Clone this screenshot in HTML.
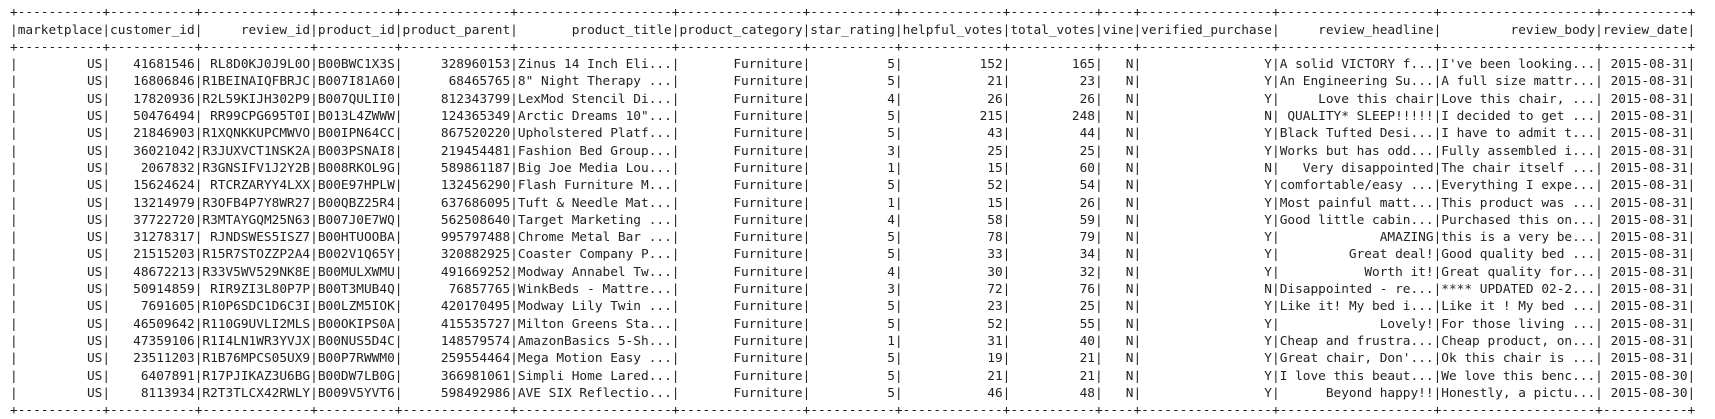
<!DOCTYPE html>
<html><head><meta charset="utf-8">
<style>
html,body{margin:0;padding:0;background:#fff;width:1715px;height:418px;overflow:hidden}
.t{position:absolute;left:10px;top:4.3px;font-family:"DejaVu Sans Mono","Liberation Mono",monospace;font-size:12.79px;line-height:17.3px;color:#222}
.r{height:17.3px;white-space:nowrap;display:block}
.r i{font-style:normal;display:inline-block;vertical-align:top;text-align:right;overflow:hidden;white-space:pre;height:17.3px}
.r.b i{text-align:left}
.a{width:11ch}.b1{width:14ch}.c{width:10ch}.d{width:20ch}.e{width:16ch}.f{width:13ch}.g{width:4ch}.h{width:17ch}
</style></head><body>
<div class="t"><div class="r b">+<i class="a">--------------------</i>+<i class="a">--------------------</i>+<i class="b1">--------------------</i>+<i class="c">--------------------</i>+<i class="b1">--------------------</i>+<i class="d">--------------------</i>+<i class="e">--------------------</i>+<i class="a">--------------------</i>+<i class="f">--------------------</i>+<i class="a">--------------------</i>+<i class="g">--------------------</i>+<i class="h">--------------------</i>+<i class="d">--------------------</i>+<i class="d">--------------------</i>+<i class="a">--------------------</i>+</div><div class="r">|<i class="a">marketplace</i>|<i class="a">customer_id</i>|<i class="b1">review_id</i>|<i class="c">product_id</i>|<i class="b1">product_parent</i>|<i class="d">product_title</i>|<i class="e">product_category</i>|<i class="a">star_rating</i>|<i class="f">helpful_votes</i>|<i class="a">total_votes</i>|<i class="g">vine</i>|<i class="h">verified_purchase</i>|<i class="d">review_headline</i>|<i class="d">review_body</i>|<i class="a">review_date</i>|</div><div class="r b">+<i class="a">--------------------</i>+<i class="a">--------------------</i>+<i class="b1">--------------------</i>+<i class="c">--------------------</i>+<i class="b1">--------------------</i>+<i class="d">--------------------</i>+<i class="e">--------------------</i>+<i class="a">--------------------</i>+<i class="f">--------------------</i>+<i class="a">--------------------</i>+<i class="g">--------------------</i>+<i class="h">--------------------</i>+<i class="d">--------------------</i>+<i class="d">--------------------</i>+<i class="a">--------------------</i>+</div><div class="r">|<i class="a">US</i>|<i class="a">41681546</i>|<i class="b1">RL8D0KJ0J9L0O</i>|<i class="c">B00BWC1X3S</i>|<i class="b1">328960153</i>|<i class="d">Zinus 14 Inch Eli...</i>|<i class="e">Furniture</i>|<i class="a">5</i>|<i class="f">152</i>|<i class="a">165</i>|<i class="g">N</i>|<i class="h">Y</i>|<i class="d">A solid VICTORY f...</i>|<i class="d">I've been looking...</i>|<i class="a">2015-08-31</i>|</div><div class="r">|<i class="a">US</i>|<i class="a">16806846</i>|<i class="b1">R1BEINAIQFBRJC</i>|<i class="c">B007I81A60</i>|<i class="b1">68465765</i>|<i class="d">8" Night Therapy ...</i>|<i class="e">Furniture</i>|<i class="a">5</i>|<i class="f">21</i>|<i class="a">23</i>|<i class="g">N</i>|<i class="h">Y</i>|<i class="d">An Engineering Su...</i>|<i class="d">A full size mattr...</i>|<i class="a">2015-08-31</i>|</div><div class="r">|<i class="a">US</i>|<i class="a">17820936</i>|<i class="b1">R2L59KIJH302P9</i>|<i class="c">B007QULII0</i>|<i class="b1">812343799</i>|<i class="d">LexMod Stencil Di...</i>|<i class="e">Furniture</i>|<i class="a">4</i>|<i class="f">26</i>|<i class="a">26</i>|<i class="g">N</i>|<i class="h">Y</i>|<i class="d">Love this chair</i>|<i class="d">Love this chair, ...</i>|<i class="a">2015-08-31</i>|</div><div class="r">|<i class="a">US</i>|<i class="a">50476494</i>|<i class="b1">RR99CPG695T0I</i>|<i class="c">B013L4ZWWW</i>|<i class="b1">124365349</i>|<i class="d">Arctic Dreams 10"...</i>|<i class="e">Furniture</i>|<i class="a">5</i>|<i class="f">215</i>|<i class="a">248</i>|<i class="g">N</i>|<i class="h">N</i>|<i class="d">QUALITY* SLEEP!!!!!</i>|<i class="d">I decided to get ...</i>|<i class="a">2015-08-31</i>|</div><div class="r">|<i class="a">US</i>|<i class="a">21846903</i>|<i class="b1">R1XQNKKUPCMWVO</i>|<i class="c">B00IPN64CC</i>|<i class="b1">867520220</i>|<i class="d">Upholstered Platf...</i>|<i class="e">Furniture</i>|<i class="a">5</i>|<i class="f">43</i>|<i class="a">44</i>|<i class="g">N</i>|<i class="h">Y</i>|<i class="d">Black Tufted Desi...</i>|<i class="d">I have to admit t...</i>|<i class="a">2015-08-31</i>|</div><div class="r">|<i class="a">US</i>|<i class="a">36021042</i>|<i class="b1">R3JUXVCT1NSK2A</i>|<i class="c">B003PSNAI8</i>|<i class="b1">219454481</i>|<i class="d">Fashion Bed Group...</i>|<i class="e">Furniture</i>|<i class="a">3</i>|<i class="f">25</i>|<i class="a">25</i>|<i class="g">N</i>|<i class="h">Y</i>|<i class="d">Works but has odd...</i>|<i class="d">Fully assembled i...</i>|<i class="a">2015-08-31</i>|</div><div class="r">|<i class="a">US</i>|<i class="a">2067832</i>|<i class="b1">R3GNSIFV1J2Y2B</i>|<i class="c">B008RKOL9G</i>|<i class="b1">589861187</i>|<i class="d">Big Joe Media Lou...</i>|<i class="e">Furniture</i>|<i class="a">1</i>|<i class="f">15</i>|<i class="a">60</i>|<i class="g">N</i>|<i class="h">N</i>|<i class="d">Very disappointed</i>|<i class="d">The chair itself ...</i>|<i class="a">2015-08-31</i>|</div><div class="r">|<i class="a">US</i>|<i class="a">15624624</i>|<i class="b1">RTCRZARYY4LXX</i>|<i class="c">B00E97HPLW</i>|<i class="b1">132456290</i>|<i class="d">Flash Furniture M...</i>|<i class="e">Furniture</i>|<i class="a">5</i>|<i class="f">52</i>|<i class="a">54</i>|<i class="g">N</i>|<i class="h">Y</i>|<i class="d">comfortable/easy ...</i>|<i class="d">Everything I expe...</i>|<i class="a">2015-08-31</i>|</div><div class="r">|<i class="a">US</i>|<i class="a">13214979</i>|<i class="b1">R3OFB4P7Y8WR27</i>|<i class="c">B00QBZ25R4</i>|<i class="b1">637686095</i>|<i class="d">Tuft &amp; Needle Mat...</i>|<i class="e">Furniture</i>|<i class="a">1</i>|<i class="f">15</i>|<i class="a">26</i>|<i class="g">N</i>|<i class="h">Y</i>|<i class="d">Most painful matt...</i>|<i class="d">This product was ...</i>|<i class="a">2015-08-31</i>|</div><div class="r">|<i class="a">US</i>|<i class="a">37722720</i>|<i class="b1">R3MTAYGQM25N63</i>|<i class="c">B007J0E7WQ</i>|<i class="b1">562508640</i>|<i class="d">Target Marketing ...</i>|<i class="e">Furniture</i>|<i class="a">4</i>|<i class="f">58</i>|<i class="a">59</i>|<i class="g">N</i>|<i class="h">Y</i>|<i class="d">Good little cabin...</i>|<i class="d">Purchased this on...</i>|<i class="a">2015-08-31</i>|</div><div class="r">|<i class="a">US</i>|<i class="a">31278317</i>|<i class="b1">RJNDSWES5ISZ7</i>|<i class="c">B00HTUOOBA</i>|<i class="b1">995797488</i>|<i class="d">Chrome Metal Bar ...</i>|<i class="e">Furniture</i>|<i class="a">5</i>|<i class="f">78</i>|<i class="a">79</i>|<i class="g">N</i>|<i class="h">Y</i>|<i class="d">AMAZING</i>|<i class="d">this is a very be...</i>|<i class="a">2015-08-31</i>|</div><div class="r">|<i class="a">US</i>|<i class="a">21515203</i>|<i class="b1">R15R7STOZZP2A4</i>|<i class="c">B002V1Q65Y</i>|<i class="b1">320882925</i>|<i class="d">Coaster Company P...</i>|<i class="e">Furniture</i>|<i class="a">5</i>|<i class="f">33</i>|<i class="a">34</i>|<i class="g">N</i>|<i class="h">Y</i>|<i class="d">Great deal!</i>|<i class="d">Good quality bed ...</i>|<i class="a">2015-08-31</i>|</div><div class="r">|<i class="a">US</i>|<i class="a">48672213</i>|<i class="b1">R33V5WV529NK8E</i>|<i class="c">B00MULXWMU</i>|<i class="b1">491669252</i>|<i class="d">Modway Annabel Tw...</i>|<i class="e">Furniture</i>|<i class="a">4</i>|<i class="f">30</i>|<i class="a">32</i>|<i class="g">N</i>|<i class="h">Y</i>|<i class="d">Worth it!</i>|<i class="d">Great quality for...</i>|<i class="a">2015-08-31</i>|</div><div class="r">|<i class="a">US</i>|<i class="a">50914859</i>|<i class="b1">RIR9ZI3L80P7P</i>|<i class="c">B00T3MUB4Q</i>|<i class="b1">76857765</i>|<i class="d">WinkBeds - Mattre...</i>|<i class="e">Furniture</i>|<i class="a">3</i>|<i class="f">72</i>|<i class="a">76</i>|<i class="g">N</i>|<i class="h">N</i>|<i class="d">Disappointed - re...</i>|<i class="d">**** UPDATED 02-2...</i>|<i class="a">2015-08-31</i>|</div><div class="r">|<i class="a">US</i>|<i class="a">7691605</i>|<i class="b1">R10P6SDC1D6C3I</i>|<i class="c">B00LZM5IOK</i>|<i class="b1">420170495</i>|<i class="d">Modway Lily Twin ...</i>|<i class="e">Furniture</i>|<i class="a">5</i>|<i class="f">23</i>|<i class="a">25</i>|<i class="g">N</i>|<i class="h">Y</i>|<i class="d">Like it! My bed i...</i>|<i class="d">Like it ! My bed ...</i>|<i class="a">2015-08-31</i>|</div><div class="r">|<i class="a">US</i>|<i class="a">46509642</i>|<i class="b1">R110G9UVLI2MLS</i>|<i class="c">B00OKIPS0A</i>|<i class="b1">415535727</i>|<i class="d">Milton Greens Sta...</i>|<i class="e">Furniture</i>|<i class="a">5</i>|<i class="f">52</i>|<i class="a">55</i>|<i class="g">N</i>|<i class="h">Y</i>|<i class="d">Lovely!</i>|<i class="d">For those living ...</i>|<i class="a">2015-08-31</i>|</div><div class="r">|<i class="a">US</i>|<i class="a">47359106</i>|<i class="b1">R1I4LN1WR3YVJX</i>|<i class="c">B00NUS5D4C</i>|<i class="b1">148579574</i>|<i class="d">AmazonBasics 5-Sh...</i>|<i class="e">Furniture</i>|<i class="a">1</i>|<i class="f">31</i>|<i class="a">40</i>|<i class="g">N</i>|<i class="h">Y</i>|<i class="d">Cheap and frustra...</i>|<i class="d">Cheap product, on...</i>|<i class="a">2015-08-31</i>|</div><div class="r">|<i class="a">US</i>|<i class="a">23511203</i>|<i class="b1">R1B76MPCS05UX9</i>|<i class="c">B00P7RWWM0</i>|<i class="b1">259554464</i>|<i class="d">Mega Motion Easy ...</i>|<i class="e">Furniture</i>|<i class="a">5</i>|<i class="f">19</i>|<i class="a">21</i>|<i class="g">N</i>|<i class="h">Y</i>|<i class="d">Great chair, Don'...</i>|<i class="d">Ok this chair is ...</i>|<i class="a">2015-08-31</i>|</div><div class="r">|<i class="a">US</i>|<i class="a">6407891</i>|<i class="b1">R17PJIKAZ3U6BG</i>|<i class="c">B00DW7LB0G</i>|<i class="b1">366981061</i>|<i class="d">Simpli Home Lared...</i>|<i class="e">Furniture</i>|<i class="a">5</i>|<i class="f">21</i>|<i class="a">21</i>|<i class="g">N</i>|<i class="h">Y</i>|<i class="d">I love this beaut...</i>|<i class="d">We love this benc...</i>|<i class="a">2015-08-30</i>|</div><div class="r">|<i class="a">US</i>|<i class="a">8113934</i>|<i class="b1">R2T3TLCX42RWLY</i>|<i class="c">B009V5YVT6</i>|<i class="b1">598492986</i>|<i class="d">AVE SIX Reflectio...</i>|<i class="e">Furniture</i>|<i class="a">5</i>|<i class="f">46</i>|<i class="a">48</i>|<i class="g">N</i>|<i class="h">Y</i>|<i class="d">Beyond happy!!</i>|<i class="d">Honestly, a pictu...</i>|<i class="a">2015-08-30</i>|</div><div class="r b">+<i class="a">--------------------</i>+<i class="a">--------------------</i>+<i class="b1">--------------------</i>+<i class="c">--------------------</i>+<i class="b1">--------------------</i>+<i class="d">--------------------</i>+<i class="e">--------------------</i>+<i class="a">--------------------</i>+<i class="f">--------------------</i>+<i class="a">--------------------</i>+<i class="g">--------------------</i>+<i class="h">--------------------</i>+<i class="d">--------------------</i>+<i class="d">--------------------</i>+<i class="a">--------------------</i>+</div></div>
</body></html>
